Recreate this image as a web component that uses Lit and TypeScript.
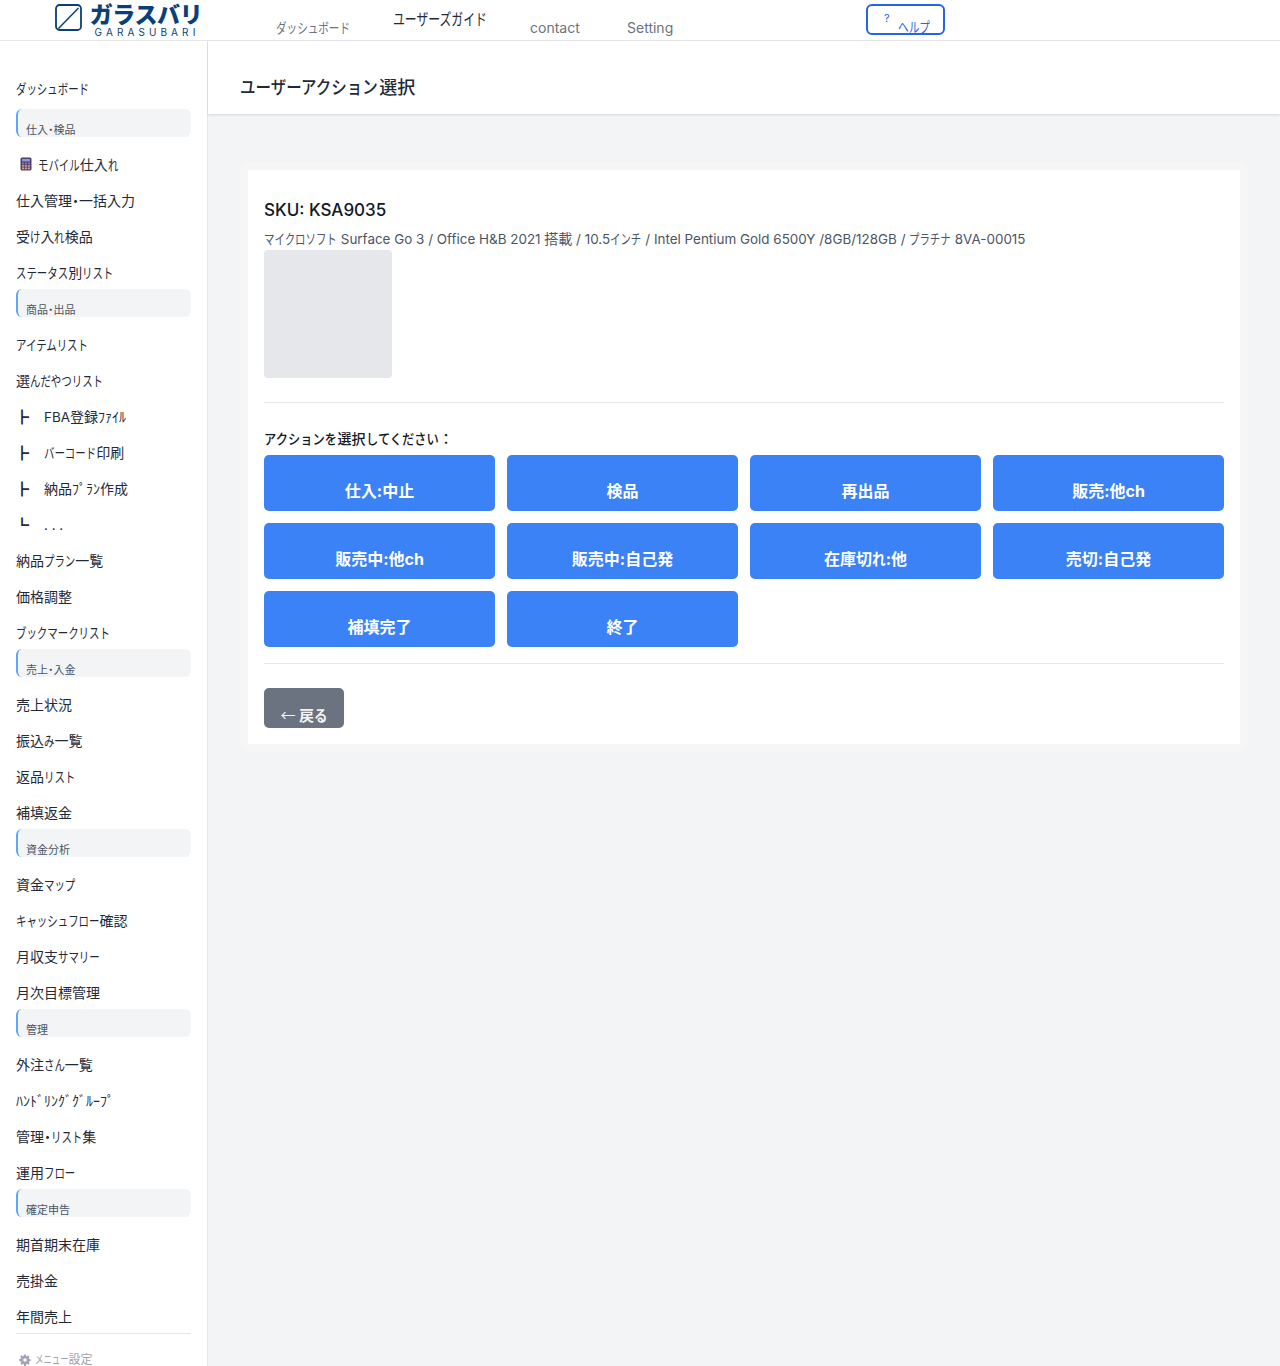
import { LitElement, html, css, svg } from "lit";
import { customElement } from "lit/decorators.js";
import { styleMap } from "lit/directives/style-map.js";

type Entry = { t: string; s?: boolean; tree?: string; icon?: boolean };

const NAV: Entry[] = [
  { t: "ダッシュボード" },
  { t: "仕入・検品", s: true },
  { t: "モバイル仕入れ", icon: true },
  { t: "仕入管理・一括入力" },
  { t: "受け入れ検品" },
  { t: "ステータス別リスト" },
  { t: "商品・出品", s: true },
  { t: "アイテムリスト" },
  { t: "選んだやつリスト" },
  { t: "FBA登録ﾌｧｲﾙ", tree: "┣" },
  { t: "バーコード印刷", tree: "┣" },
  { t: "納品ﾌﾟﾗﾝ作成", tree: "┣" },
  { t: ". . .", tree: "┗" },
  { t: "納品プラン一覧" },
  { t: "価格調整" },
  { t: "ブックマークリスト" },
  { t: "売上・入金", s: true },
  { t: "売上状況" },
  { t: "振込み一覧" },
  { t: "返品リスト" },
  { t: "補填返金" },
  { t: "資金分析", s: true },
  { t: "資金マップ" },
  { t: "キャッシュフロー確認" },
  { t: "月収支サマリー" },
  { t: "月次目標管理" },
  { t: "管理", s: true },
  { t: "外注さん一覧" },
  { t: "ﾊﾝﾄﾞﾘﾝｸﾞｸﾞﾙｰﾌﾟ" },
  { t: "管理・リスト集" },
  { t: "運用フロー" },
  { t: "確定申告", s: true },
  { t: "期首期末在庫" },
  { t: "売掛金" },
  { t: "年間売上" },
];

const ACTIONS = [
  "仕入:中止", "検品", "再出品", "販売:他ch",
  "販売中:他ch", "販売中:自己発", "在庫切れ:他", "売切:自己発",
  "補填完了", "終了",
];

/* Kana runs are condensed and Latin runs a touch smaller, as in the narrow UI face of the reference. */
function fmt(text: string) {
  return text
    .split(/([ぁ-んァ-ヶー]+|[A-Za-z0-9&/.\- ]{3,})/)
    .filter((p) => p)
    .map((p) =>
      /^[ぁ-んァ-ヶー]/.test(p)
        ? html`<span class="k" style=${styleMap({ "--n": String(p.length) })}>${p}</span>`
        : /^[A-Za-z0-9&/.\- ]{3,}$/.test(p)
          ? html`<span class="l">${p}</span>`
          : p,
    );
}

const calc = svg`<svg class="calc" viewBox="0 0 12 14" width="12" height="14" aria-hidden="true">
  <rect x="0.5" y="0.5" width="11" height="13" rx="1.5" fill="#4b3f6b"/>
  <rect x="2" y="2" width="8" height="2.4" fill="#8f9bd0"/>
  <g fill="#8f6fa8"><rect x="2" y="5.5" width="2.2" height="1.8"/><rect x="4.9" y="5.5" width="2.2" height="1.8"/><rect x="7.8" y="5.5" width="2.2" height="1.8"/></g>
  <g fill="#c98aa0"><rect x="2" y="8" width="2.2" height="1.8"/><rect x="4.9" y="8" width="2.2" height="1.8"/><rect x="7.8" y="8" width="2.2" height="1.8"/></g>
  <g fill="#d9a070"><rect x="2" y="10.5" width="2.2" height="1.8"/><rect x="4.9" y="10.5" width="2.2" height="1.8"/><rect x="7.8" y="10.5" width="2.2" height="1.8"/></g>
</svg>`;

const gear = svg`<svg class="gear" viewBox="0 0 24 24" width="12" height="12" aria-hidden="true">
  <path fill="#a5a3b5" d="M12 8.5a3.5 3.5 0 1 0 0 7 3.5 3.5 0 0 0 0-7zM10.2 1h3.6l.6 3.2 1.7.7 2.7-1.8 2.5 2.5-1.8 2.7.7 1.7 3.2.6v3.6l-3.2.6-.7 1.7 1.8 2.7-2.5 2.5-2.7-1.8-1.7.7-.6 3.2h-3.6l-.6-3.2-1.7-.7-2.7 1.8-2.5-2.5 1.8-2.7-.7-1.7L.4 13.8v-3.6l3.2-.6.7-1.7-1.8-2.7 2.5-2.5 2.7 1.8 1.7-.7z" fill-rule="evenodd"/>
</svg>`;

const logoMark = svg`<svg class="mark" viewBox="0 0 27 27" width="27" height="27" aria-hidden="true">
  <rect x="1" y="1" width="25" height="25" rx="3.5" fill="none" stroke="#0b3f78" stroke-width="1.8"/>
  <path d="M3.5 24.5 L23.5 4" stroke="#0b3f78" stroke-width="1.5" fill="none"/>
</svg>`;

@customElement("app-root")
export class AppRoot extends LitElement {
  static styles = css`
    :host {
      display: block;
      height: 1366px;
      overflow: hidden;
      background: #f3f4f6;
      font-family: Inter, "Noto Sans CJK JP", "Noto Sans", sans-serif;
      font-feature-settings: "palt";
      color: #1f2937;
      --s: 0.745;
    }
    * { box-sizing: border-box; }
    .k {
      display: inline-block;
      width: calc(var(--n) * var(--s) * 1em);
      transform: scaleX(var(--s));
      transform-origin: 0 50%;
      white-space: nowrap;
      font-feature-settings: normal;
    }
    .l { font-size: 0.96em; }

    .top {
      height: 41px;
      background: #fff;
      border-bottom: 1px solid #e5e7eb;
      display: flex;
    }
    .brand {
      width: 276px;
      padding: 3px 0 0 55px;
      display: flex;
      gap: 8px;
      flex: none;
    }
    .mark { margin-top: 1px; flex: none; }
    .brand-text { display: flex; flex-direction: column; align-items: center; width: 112px; }
    .brand-ja {
      font-size: 23px;
      font-weight: 900;
      line-height: 23px;
      padding-top: 1px;
      color: #0b3f78;
      white-space: nowrap;
      font-feature-settings: normal;
      letter-spacing: -0.4px;
    }
    .brand-en {
      font-size: 10px;
      line-height: 10px;
      letter-spacing: 4.1px;
      padding-left: 2px;
      color: #0b3f78;
      white-space: nowrap;
    }
    .tabs { display: flex; align-items: flex-start; }
    .tab {
      font-size: 14px;
      line-height: 20px;
      color: #6b7280;
      padding-top: 18px;
      white-space: nowrap;
    }
    .tab.dash { width: 117px; --s: 0.755; }
    .tab.guide { width: 137px; color: #1f2937; font-size: 16px; line-height: 24px; padding-top: 7px; --s: 0.74; }
    .tab.contact { width: 97px; }
    .tab.setting { width: 239px; }
    .help {
      width: 79px;
      height: 31px;
      margin-top: 4px;
      border: 2px solid #2563eb;
      border-radius: 6px;
      color: #2563eb;
      display: flex;
      padding-left: 16px;
      font-size: 14px;
      --s: 0.76;
    }
    .help .q { font-size: 11px; line-height: 14px; margin-top: 5px; width: 14px; }
    .help .lbl { line-height: 20px; margin-top: 11px; white-space: nowrap; }

    .body { display: flex; height: 1325px; }

    .side {
      width: 208px;
      flex: none;
      background: #fff;
      border-right: 1px solid #e5e7eb;
      padding: 30px 16px 0;
      overflow: hidden;
    }
    .item {
      height: 36px;
      display: flex;
      align-items: center;
      font-size: 14px;
      color: #1f2937;
      white-space: nowrap;
    }
    .item:first-child { margin-bottom: 4px; }
    .in { display: flex; align-items: center; margin-top: -2px; }
    .calc { margin: 0 6px 0 4px; flex: none; }
    .tree { width: 28px; margin-left: -1px; padding-right: 1px; font-size: 14px; font-weight: 700; flex: none; color: #1f2937; }
    .tree + span { margin-left: 1px; }
    .sec {
      height: 28px;
      margin: -2px 0 10px;
      background: #f3f4f6;
      border-left: 2px solid #60a5fa;
      border-radius: 6px;
      padding: 14px 0 0 8px;
      font-size: 11px;
      line-height: 15px;
      color: #4b5563;
      white-space: nowrap;
      overflow: hidden;
    }
    .foot {
      border-top: 1px solid #e5e7eb;
      margin-top: -2px;
      padding: 20px 0 0 3px;
      display: flex;
      align-items: center;
      gap: 4px;
      font-size: 12px;
      line-height: 12px;
      color: #a1a1aa;
      white-space: nowrap;
      --s: 0.7;
    }

    .main { flex: 1; min-width: 0; }
    .head {
      height: 73px;
      background: #fff;
      box-shadow: 0 1px 2px rgba(0, 0, 0, 0.12);
      padding: 16px 32px 0;
      display: flex;
      align-items: center;
      font-size: 18px;
      font-weight: 500;
      color: #1f2937;
      --s: 0.86;
    }
    .wrap { padding: 48px 32px 0; }
    .card {
      background: #fff;
      border: 8px solid #f6f6f7;
      border-radius: 8px;
      padding: 28px 16px 16px;
    }
    .sku {
      font-size: 17px;
      font-weight: 500;
      line-height: 24px;
      color: #111827;
    }
    .desc {
      font-size: 14px;
      line-height: 20px;
      color: #4b5563;
      margin-top: 7px;
      white-space: nowrap;
    }
    .thumb {
      width: 128px;
      height: 128px;
      margin-top: 1px;
      background: #e5e7eb;
      border-radius: 4px;
    }
    .rule { height: 1px; background: #e5e7eb; }
    .rule.a { margin-top: 24px; }
    .rule.b { margin-top: 16px; }
    .ask {
      font-size: 14px;
      font-weight: 500;
      line-height: 20px;
      color: #111827;
      margin-top: 26px;
      margin-bottom: 6px;
      font-feature-settings: normal;
      --s: 0.875;
    }
    .grid {
      display: grid;
      grid-template-columns: repeat(4, 1fr);
      gap: 12px;
    }
    .act {
      height: 56px;
      background: #3b82f6;
      border-radius: 5px;
      color: #fff;
      font-size: 16px;
      font-weight: 700;
      text-align: center;
      line-height: 22px;
      padding-top: 25px;
      white-space: nowrap;
      --s: 0.85;
    }
    .back {
      width: 80px;
      height: 40px;
      margin-top: 24px;
      background: #6b7280;
      border-radius: 5px;
      color: #f3f4f6;
      font-size: 15px;
      font-weight: 700;
      text-align: center;
      line-height: 22px;
      padding-top: 16px;
      white-space: nowrap;
      --s: 0.9;
    }
    .arrow { font-family: "Noto Sans CJK JP", sans-serif; font-weight: 400; }
  `;

  private entry(e: Entry) {
    if (e.s) return html`<div class="sec">${e.t}</div>`;
    return html`<div class="item">
      <span class="in">
        ${e.icon ? calc : ""}
        ${e.tree ? html`<span class="tree">${e.tree}</span>` : ""}
        <span>${fmt(e.t)}</span>
      </span>
    </div>`;
  }

  render() {
    return html`
      <div class="top">
        <div class="brand">
          ${logoMark}
          <div class="brand-text">
            <div class="brand-ja">ガラスバリ</div>
            <div class="brand-en">GARASUBARI</div>
          </div>
        </div>
        <div class="tabs">
          <div class="tab dash">${fmt("ダッシュボード")}</div>
          <div class="tab guide">${fmt("ユーザーズガイド")}</div>
          <div class="tab contact">contact</div>
          <div class="tab setting">Setting</div>
          <div class="help"><span class="q">?</span><span class="lbl">${fmt("ヘルプ")}</span></div>
        </div>
      </div>
      <div class="body">
        <aside class="side">
          ${NAV.map((e) => this.entry(e))}
          <div class="foot">${gear}<span>${fmt("メニュー設定")}</span></div>
        </aside>
        <main class="main">
          <div class="head"><span>${fmt("ユーザーアクション選択")}</span></div>
          <div class="wrap">
            <section class="card">
              <div class="sku">SKU: KSA9035</div>
              <div class="desc">${fmt("マイクロソフト Surface Go 3 / Office H&B 2021 搭載 / 10.5インチ / Intel Pentium Gold 6500Y /8GB/128GB / プラチナ 8VA-00015")}</div>
              <div class="thumb"></div>
              <div class="rule a"></div>
              <div class="ask">${fmt("アクションを選択してください：")}</div>
              <div class="grid">
                ${ACTIONS.map((a) => html`<div class="act">${fmt(a)}</div>`)}
              </div>
              <div class="rule b"></div>
              <div class="back"><span class="arrow">←</span> ${fmt("戻る")}</div>
            </section>
          </div>
        </main>
      </div>
    `;
  }
}
